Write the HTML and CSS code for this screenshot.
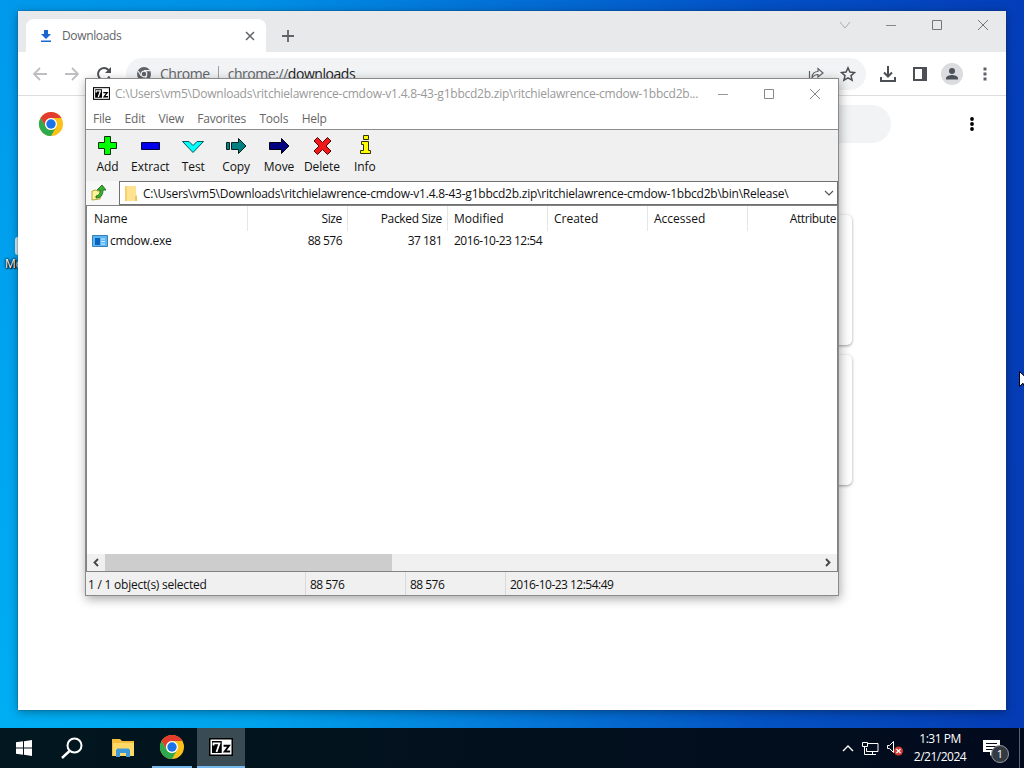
FILE: index.html
```html
<!DOCTYPE html>
<html lang="en">
<head>
  <meta charset="UTF-8">
  <title>Downloads</title>
  <link rel="stylesheet" href="styles.css">
</head>
<body>
  <!-- shared icons -->
  <svg width="0" height="0" class="defs">
    <symbol id="chrome-logo" viewBox="0 0 24 24">
      <circle cx="12" cy="12" r="12" fill="#fbc116"/>
      <path d="M1.6 6A12 12 0 0 1 22.4 6H12a6 6 0 0 0-5.2 9Z" fill="#e33b2e"/>
      <path d="M1.6 6A12 12 0 0 0 12 24l5.2-9A6 6 0 0 1 6.8 15Z" fill="#2da94f"/>
      <circle cx="12" cy="12" r="6" fill="#fff"/>
      <circle cx="12" cy="12" r="4.7" fill="#1a73e8"/>
    </symbol>
    <symbol id="sevenzip" viewBox="0 0 16 12">
      <path d="M0 0h16v12H0z" fill="#000"/>
      <path d="M1 1h14v10H1z" fill="#fff"/>
      <path d="M2 2h6.500v8H2z" fill="#000"/>
      <path d="M3 5V3.600h4L5 9.300" fill="none" stroke="#fff" stroke-width="1.200"/>
      <path d="M9.700 5.200h3.600L10.500 9h3.600" fill="none" stroke="#000" stroke-width="1.300"/>
    </symbol>
  </svg>

  <div class="desktop">
    <div class="shortcut"><i></i><span>Mo</span></div>

    <div class="browser">
      <div class="tabstrip">
        <div class="tab">
          <svg width="12" height="14" viewBox="0 0 12 14"><path d="M4 1h4v4h3L6 10 1 5h3zM1 11.500h10V13H1z" fill="#1967d2"/></svg>
          <span>Downloads</span>
          <svg width="10" height="10" viewBox="0 0 10 10"><path d="M1 1l8 8M9 1L1 9" stroke="#5f6368" stroke-width="1.500"/></svg>
        </div>
        <svg class="plus" width="14" height="14" viewBox="0 0 14 14"><path d="M7 1v12M1 7h12" stroke="#5f6368" stroke-width="1.800"/></svg>
        <div class="win-buttons">
          <svg width="12" height="12"><path d="M1 3l5 6 5-6" fill="none" stroke="#b0a8b0"/></svg>
          <svg width="12" height="12"><path d="M1 6.500h10" stroke="#888"/></svg>
          <svg width="12" height="12"><path d="M1.500 1.500h9v9h-9z" fill="none" stroke="#777"/></svg>
          <svg width="12" height="12"><path d="M1 1l10 10M11 1L1 11" stroke="#777"/></svg>
        </div>
      </div>
      <div class="navbar">
        <svg width="16" height="16" viewBox="0 0 16 16"><path d="M15 8H2M8 2L2 8l6 6" fill="none" stroke="#bcbec1" stroke-width="1.800"/></svg>
        <svg width="16" height="16" viewBox="0 0 16 16"><path d="M1 8h13M8 2l6 6-6 6" fill="none" stroke="#bcbec1" stroke-width="1.800"/></svg>
        <svg width="16" height="16" viewBox="0 0 16 16"><path d="M13.500 10.500A6 6 0 1 1 12.500 4" fill="none" stroke="#4c4f53" stroke-width="2"/><path d="M15 1v6H9z" fill="#4c4f53"/></svg>
        <div class="omnibox">
          <svg width="14" height="14" viewBox="0 0 14 14"><circle cx="7" cy="7" r="7" fill="#5f6368"/><circle cx="7" cy="7" r="2.800" fill="#5f6368" stroke="#f1f3f4" stroke-width="1.200"/><path d="M7 3.700h6M4 8.700L1.200 4M9.900 8.700L7 13.500" stroke="#f1f3f4" stroke-width="1.200"/></svg>
          <span class="site">Chrome</span>
          <span class="url">chrome://<b>downloads</b></span>
          <svg class="share" width="16" height="16" viewBox="0 0 16 16"><path d="M1.500 5v10H12M4 12c0-5 3-6.500 6-6.500V2.500L15 7l-5 4V8.500C7 8.500 5.500 9.500 4 12z" fill="none" stroke="#5f6368" stroke-width="1.200"/></svg>
          <svg width="16" height="16" viewBox="0 0 16 16"><path d="M8 1.800l1.900 4.300 4.600.4-3.500 3.100 1.100 4.600L8 11.800l-4.100 2.400L5 9.600 1.500 6.500l4.600-.4z" fill="none" stroke="#4c4f53" stroke-width="1.500"/></svg>
        </div>
        <svg class="dl" width="16" height="16" viewBox="0 0 16 16"><path d="M8 0v10M4 6.500l4 4 4-4M1 11v4h14v-4" fill="none" stroke="#4c4f53" stroke-width="2"/></svg>
        <svg class="panel" width="14" height="14" viewBox="0 0 14 14"><path d="M1 1h12v12H1z" fill="none" stroke="#4c4f53" stroke-width="2"/><path d="M9 1h4v12H9z" fill="#4c4f53"/></svg>
        <svg class="avatar" width="22" height="22" viewBox="0 0 22 22"><circle cx="11" cy="11" r="11" fill="#dadce0"/><circle cx="11" cy="8" r="3" fill="#4c5157"/><path d="M5 16.500v-1.300c0-2.300 4-3.200 6-3.200s6 .9 6 3.200v1.300z" fill="#4c5157"/></svg>
        <svg class="dots" width="4" height="14" viewBox="0 0 4 14"><path d="M.5.500h3v3h-3zM.5 5.500h3v3h-3zM.5 10.500h3v3h-3z" fill="#5f6368"/></svg>
      </div>
      <div class="page">
        <div class="page-head">
          <svg width="24" height="24"><use href="#chrome-logo"/></svg>
          <div class="search"></div>
          <svg width="4" height="16" viewBox="0 0 4 16"><circle cx="2" cy="3" r="1.900"/><circle cx="2" cy="8" r="1.900"/><circle cx="2" cy="13" r="1.900"/></svg>
        </div>
        <div class="card"></div>
        <div class="card"></div>
      </div>
    </div>

    <div class="fm">
      <div class="title">
        <svg width="17" height="13"><use href="#sevenzip"/></svg>
        <span>C:\Users\vm5\Downloads\ritchielawrence-cmdow-v1.4.8-43-g1bbcd2b.zip\ritchielawrence-cmdow-1bbcd2b...</span>
        <div class="win-buttons">
          <svg width="12" height="12"><path d="M1 6.500h10" stroke="#999"/></svg>
          <svg width="12" height="12"><path d="M1.500 1.500h9v9h-9z" fill="none" stroke="#888"/></svg>
          <svg width="12" height="12"><path d="M1 1l10 10M11 1L1 11" stroke="#888"/></svg>
        </div>
      </div>
      <div class="menu">
        <span>File</span><span>Edit</span><span>View</span><span>Favorites</span><span>Tools</span><span>Help</span>
      </div>
      <div class="toolbar">
        <div class="tool">
          <svg width="24" height="24"><path d="M9.500 3.500h6v6h6v6h-6v6h-6v-6h-6v-6h6z" fill="#0f0" stroke="#063006"/></svg>
          <span>Add</span>
        </div>
        <div class="tool">
          <svg width="24" height="24"><path d="M3.500 9.500h18v7h-18z" fill="#00e" stroke="#003"/></svg>
          <span>Extract</span>
        </div>
        <div class="tool">
          <svg width="24" height="24"><path d="M1.500 8.500H8l4 4 4-4h6.500L12 19.500z" fill="#0ff" stroke="#055"/></svg>
          <span>Test</span>
        </div>
        <div class="tool">
          <svg width="24" height="24"><path d="M2.500 9.500h3v7h-3zM7.500 9.500h7v-4l7.500 7.500-7.500 7.500v-4h-7z" fill="#008080" stroke="#022"/></svg>
          <span>Copy</span>
        </div>
        <div class="tool">
          <svg width="24" height="24"><path d="M2.500 9.500h12v-4l7.500 7.500-7.500 7.500v-4h-12z" fill="#000080" stroke="#001"/></svg>
          <span>Move</span>
        </div>
        <div class="tool">
          <svg width="24" height="24"><path d="M7.500 4.500l5 5 5-5 3.500 3.500-5 5 5 5-3.500 3.500-5-5-5 5L4 18l5-5-5-5z" fill="#f01818" stroke="#500"/></svg>
          <span>Delete</span>
        </div>
        <div class="tool">
          <svg width="24" height="24"><path d="M10.500 2.500h5v4h-5zM8.500 8.500h7v9h2v3h-10v-3h3v-6h-2z" fill="#ff0" stroke="#330"/></svg>
          <span>Info</span>
        </div>
      </div>
      <div class="address">
        <div class="up">
          <svg width="16" height="17" viewBox="0 0 16 17"><path d="M1 7l4-1 1 1h5l-2 8-8 1z" fill="#fff29a" stroke="#b8a840"/><path d="M5 12c4-1 4-3 4-6H6l5-5 4 5h-3c0 5-2 8-7 8z" fill="#38b030" stroke="#176012" stroke-width=".8"/></svg>
        </div>
        <div class="path">
          <svg width="14" height="17" viewBox="0 0 14 17"><path d="M1 1h11v8l1 1v6H1z" fill="#ffe391"/><path d="M1 1h2v15H1z" fill="#f6d06d"/><path d="M11 11h2v5h-2z" fill="#e9c866"/></svg>
          <span>C:\Users\vm5\Downloads\ritchielawrence-cmdow-v1.4.8-43-g1bbcd2b.zip\ritchielawrence-cmdow-1bbcd2b\bin\Release\</span>
          <svg class="chevron" width="10" height="8"><path d="M1 2l4 4 4-4" fill="none" stroke="#555" stroke-width="1.200"/></svg>
        </div>
      </div>
      <div class="list">
        <div class="row head">
          <span>Name</span><span class="num">Size</span><span class="num">Packed Size</span><span>Modified</span><span>Created</span><span>Accessed</span><span class="attr">Attribute</span>
        </div>
        <div class="row">
          <span class="file">
            <svg width="16" height="12"><path d="M.5.500h15v11H.5z" fill="#59b5f5" stroke="#3b7eb4"/><path d="M3 3h5v7H3z" fill="#0963bd"/><path d="M9 4h4M9 6.500h4M9 9h4" stroke="#d6efff"/></svg>
            cmdow.exe</span><span class="num digits">88 576</span><span class="num digits">37 181</span><span class="digits">2016-10-23 12:54</span>
        </div>
        <div class="scroll">
          <svg width="18" height="17"><path d="M11 5L7.500 8.500 11 12" fill="none" stroke="#444" stroke-width="1.800"/></svg>
          <div class="thumb"></div>
          <svg width="18" height="17"><path d="M7 5l3.500 3.500L7 12" fill="none" stroke="#444" stroke-width="1.800"/></svg>
        </div>
      </div>
      <div class="status">
        <span class="sel">1 / 1 object(s) selected</span><span class="digits">88 576</span><span class="digits">88 576</span><span class="date digits">2016-10-23 12:54:49</span>
      </div>
    </div>

    <div class="taskbar">
      <div class="task start"><svg width="16" height="16"><path d="M0 2.300l7-1v6.200H0zM8 1.200L16 0v7.500H8zM0 8.500h7v6.200l-7-1zM8 8.500h8V16l-8-1.200z" fill="#fff"/></svg></div>
      <div class="task"><svg width="24" height="24"><circle cx="14.500" cy="9.500" r="7" fill="none" stroke="#fff" stroke-width="2"/><path d="M9.500 15L2 22" stroke="#fff" stroke-width="2.400"/></svg></div>
      <div class="task files"><svg width="22" height="20"><path d="M0 1h8l2 2h12v15H0z" fill="#f5bd3c"/><path d="M1 5h21v13H1z" fill="#ffd867"/><path d="M4 19v-7l1.500-1.500h11L18 12v7h-4v-4H8v4z" fill="#3d99d8"/></svg></div>
      <div class="task open"><svg width="24" height="24"><use href="#chrome-logo"/></svg></div>
      <div class="task open active"><svg width="24" height="18"><use href="#sevenzip"/></svg></div>
      <div class="tray">
        <svg width="12" height="8"><path d="M1 7l5-5 5 5" fill="none" stroke="#fff" stroke-width="1.400"/></svg>
        <svg width="17" height="15"><path d="M6 2.500h10v8H4.500V7M.5 1.500h5v4h-5zM2.500 5.500v8h5M10.500 11v3M7 13.500h7" fill="none" stroke="#fff"/></svg>
        <svg width="17" height="15"><path d="M.5 4.500h2l4-4v11l-4-4h-2z" fill="none" stroke="#fff"/><circle cx="11.500" cy="10" r="4.500" fill="#d33a34"/><path d="M9.500 8l4 4M13.500 8l-4 4" stroke="#fff" stroke-width="1.200"/></svg>
      </div>
      <div class="clock"><div>1:31 PM</div><div class="day">2/21/2024</div></div>
      <div class="notes">
        <svg width="17" height="16"><path d="M0 0h17v12H11l-4 4v-4H0z" fill="#fff"/><path d="M3 3.500h11M3 6.500h11M3 9.500h7" stroke="#020d1c"/></svg>
        <span class="badge">1</span>
      </div>
      <div class="peek"></div>
    </div>

    <svg class="cursor" width="12" height="19"><path d="M.5.500v15l3.500-3.300L6.500 18l2.500-1-2.500-5.500H12z" fill="#fff" stroke="#000"/></svg>
  </div>
</body>
</html>
```

FILE: styles.css
```css
* {
  box-sizing: border-box;
}

body {
  margin: 0;
  font-family: "Open Sans", "Noto Sans", sans-serif;
  font-size: 12px;
  color: #111;
  overflow: hidden;
}

svg {
  display: block;
  flex: none;
}

.defs {
  position: absolute;
}

.desktop {
  position: relative;
  width: 1024px;
  height: 768px;
  overflow: hidden;
  white-space: nowrap;
  background:
    linear-gradient(180deg, rgba(0, 70, 205, 0.2), rgba(0, 70, 205, 0) 95%),
    linear-gradient(90deg, #00aef3 0, #00a2ec 25%, #0479d8 50%, #0452c2 75%, #053bb4 100%);
}

.shortcut {
  position: absolute;
  left: 5px;
  top: 237px;
  color: #fff;
  text-shadow: 1px 1px 1px #000, 0 0 2px #000, 0 0 3px #000;
}

.shortcut i {
  display: block;
  width: 8px;
  height: 18px;
  margin-left: 10px;
  background: #d9edf8;
  border-radius: 3px;
}

/* browser window */
.browser {
  position: absolute;
  left: 18px;
  top: 11px;
  width: 988px;
  height: 699px;
  background: #fff;
  box-shadow: 0 0 1px #234, 0 2px 9px rgba(0, 0, 0, 0.35);
}

.tabstrip {
  display: flex;
  height: 41px;
  padding-left: 8px;
  background: #e8e9eb;
}

.tab {
  display: flex;
  align-items: center;
  width: 240px;
  margin-top: 8px;
  padding: 0 11px 0 14px;
  background: #fff;
  border-radius: 8px 8px 0 0;
  color: #5f6368;
  letter-spacing: -0.35px;
}

.tab span {
  flex: 1;
  margin-left: 10px;
}

.plus {
  margin: 18px 0 0 15px;
}

.win-buttons {
  display: flex;
  gap: 34px;
  margin-left: auto;
}

.tabstrip .win-buttons {
  padding: 8px 17px 0 0;
}

.navbar {
  display: flex;
  align-items: center;
  height: 44px;
  padding: 0 18px 0 14px;
  border-bottom: 1px solid #dcdde0;
}

.navbar > svg + svg {
  margin-left: 16px;
}

.omnibox {
  display: flex;
  align-items: center;
  width: 740px;
  height: 32px;
  margin-left: 14px;
  padding: 0 10px 0 11px;
  background: #f1f3f4;
  border-radius: 16px;
  font-size: 14px;
  letter-spacing: -0.45px;
  color: #5f6368;
}

.site {
  margin-left: 9px;
  padding-right: 8px;
  border-right: 1px solid #9aa0a6;
  line-height: 16px;
}

.url {
  margin-left: 9px;
}

.url b {
  font-weight: normal;
  color: #202124;
}

.share {
  margin: 0 16px 0 auto;
}

.navbar .dl {
  margin-left: 14px;
}

.navbar .panel {
  margin-left: 17px;
}

.navbar .avatar {
  margin-left: 14px;
}

.navbar .dots {
  margin-left: 20px;
}

.page-head {
  display: flex;
  align-items: center;
  height: 56px;
  padding-left: 21px;
}

.search {
  width: 680px;
  height: 38px;
  margin: 0 79px 0 148px;
  background: #f1f3f4;
  border-radius: 19px;
}

.card {
  width: 680px;
  height: 130px;
  margin: 63px auto 0;
  border-radius: 5px;
  box-shadow: 0 1px 3px rgba(60, 64, 67, 0.5);
}

.card + .card {
  margin-top: 10px;
}

/* archive window */
.fm {
  position: absolute;
  left: 85px;
  top: 78px;
  width: 754px;
  height: 518px;
  display: flex;
  flex-direction: column;
  background: #fff;
  border: 1px solid #8a8a8a;
  box-shadow: 1px 3px 10px rgba(0, 0, 0, 0.35);
  letter-spacing: -0.23px;
}

.title {
  display: flex;
  align-items: center;
  height: 29px;
  padding: 0 17px 0 7px;
  color: #999;
}

.title span {
  margin-left: 5px;
}

.menu {
  display: flex;
  height: 21px;
  padding-left: 7px;
  gap: 13.5px;
  line-height: 21px;
  color: #666;
}

.toolbar {
  display: flex;
  height: 52px;
  background: #f0f0f0;
  border-top: 1px solid #8c8c8c;
  letter-spacing: -0.05px;
}

.tool {
  display: flex;
  flex-direction: column;
  align-items: center;
  width: 42.9px;
  padding-top: 3px;
  line-height: 20px;
}

.address {
  display: flex;
  height: 24px;
}

.up {
  width: 33px;
  padding: 3px 0 0 5px;
  background: #f8f8f8;
}

.path {
  flex: 1;
  display: flex;
  align-items: center;
  padding: 0 3px 0 4px;
  border: 1px solid #707070;
}

.path span {
  margin-left: 5px;
}

.chevron {
  margin-left: auto;
}

.list {
  flex: 1;
  display: flex;
  flex-direction: column;
  border: 1px solid #828282;
  overflow: hidden;
}

.row {
  display: grid;
  grid-template-columns: 161px 100px 100px 100px 100px 100px 88px;
  height: 20px;
  line-height: 20px;
}

.row > span {
  padding: 0 5px 0 6px;
}

.row > span:first-child {
  padding-left: 7px;
}

.head {
  height: 25px;
  line-height: 25px;
  letter-spacing: 0;
}

.head > span {
  border-right: 1px solid #e6e6e6;
}

.num {
  text-align: right;
}

.row > .digits.num {
  padding-right: 6px;
}

.head .num {
  letter-spacing: -0.35px;
}

.head > .attr {
  padding: 0;
  border: none;
  text-align: right;
  letter-spacing: -0.4px;
}

.digits {
  letter-spacing: -0.52px;
}

.row > .file:first-child {
  display: flex;
  align-items: center;
  gap: 2px;
  padding-left: 5px;
}

.scroll {
  display: flex;
  height: 17px;
  margin-top: auto;
  background: #f0f0f0;
}

.thumb {
  width: 287px;
  margin-right: auto;
  background: #cdcdcd;
}

.status {
  display: flex;
  height: 23px;
  line-height: 26px;
  background: #f0f0f0;
}

.status span {
  width: 100px;
  padding-left: 4px;
  border-right: 1px solid #d9d9d9;
  height: 23px;
}

.status .sel {
  width: 220px;
  padding-left: 2px;
}

.status .date {
  width: 200px;
  border: none;
}

/* taskbar */
.taskbar {
  position: absolute;
  left: 0;
  bottom: 0;
  display: flex;
  align-items: center;
  width: 1024px;
  height: 40px;
  background: linear-gradient(90deg, #02171f, #02101d 50%, #020b1e);
  color: #fff;
}

.task {
  display: flex;
  align-items: center;
  justify-content: center;
  width: 50px;
  height: 40px;
}

.start {
  width: 47px;
}

.files {
  padding-left: 2px;
}

.open {
  width: 40px;
  margin-left: 5px;
  border-bottom: 2px solid #76b9ed;
}

.active {
  width: 48px;
  background: #3a4b54;
}

.tray {
  display: flex;
  align-items: center;
  gap: 8px;
  margin-left: auto;
}

.clock {
  width: 72px;
  text-align: center;
  line-height: 18px;
  letter-spacing: -0.5px;
}

.notes {
  position: relative;
  width: 43px;
  padding-left: 7px;
}

.badge {
  position: absolute;
  left: 15px;
  top: 5px;
  width: 18px;
  height: 18px;
  border: 1px solid #999;
  border-radius: 50%;
  background: #343a43;
  font-size: 11px;
  line-height: 16px;
  text-align: center;
}

.peek {
  width: 5px;
  height: 40px;
  border-left: 1px solid #59626c;
}

.cursor {
  position: absolute;
  left: 1019px;
  top: 371px;
}
```
